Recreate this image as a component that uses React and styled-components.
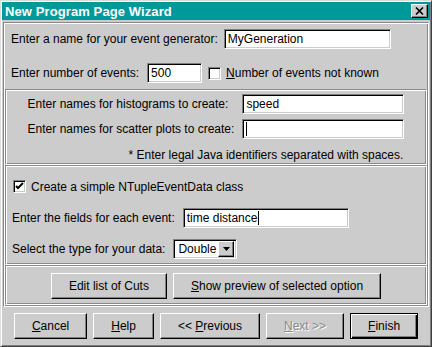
import React from "react";
import styled, { createGlobalStyle, css } from "styled-components";

const Global = createGlobalStyle`
  html, body { margin: 0; padding: 0; background: #cccccc; }
  body { font-family: "Liberation Sans", Arial, sans-serif; font-size: 12px; color: #000; }
`;

const Window = styled.div`
  box-sizing: border-box;
  width: 432px;
  height: 347px;
  background: #cccccc;
  border: 1px solid;
  border-color: #dddddd #404040 #404040 #dddddd;
  box-shadow: inset 1px 1px 0 #ffffff, inset -1px -1px 0 #808080;
  padding: 1px;
  display: flex;
  flex-direction: column;
`;

const TitleBar = styled.div`
  height: 18px;
  background: #009999;
  display: flex;
  align-items: center;
  justify-content: space-between;
  padding: 0 2px 0 3px;
`;

const Title = styled.span`
  color: #fff;
  font-weight: bold;
  font-size: 13px;
  letter-spacing: 0.1px;
`;

const raised = css`
  background: #cccccc;
  border: 1px solid;
  border-color: #ffffff #000000 #000000 #ffffff;
  box-shadow: inset -1px -1px 0 #808080;
`;

const sunken = css`
  border: 1px solid;
  border-color: #808080 #ffffff #ffffff #808080;
  box-shadow: inset 1px 1px 0 #000000, inset -1px -1px 0 #cccccc;
`;

const CloseBtn = styled.div`
  ${raised};
  box-sizing: border-box;
  width: 17px;
  height: 14px;
  display: flex;
  align-items: center;
  justify-content: center;
`;

const Content = styled.div`
  flex: 1;
  display: flex;
  flex-direction: column;
  padding: 2px 1px 0;
`;

const etched = css`
  border: 1px solid;
  border-color: #8a8a8a #ffffff #ffffff #8a8a8a;
  box-shadow: inset 1px 1px 0 #ffffff, inset -1px -1px 0 #8a8a8a;
`;

const MainPanel = styled.div`
  ${etched};
  display: flex;
  flex-direction: column;
  padding: 1px;
`;

const Section = styled.div`
  ${(p) => (p.$bordered ? etched : "")};
  display: flex;
  flex-direction: column;
  padding: ${(p) => p.$pad};
  gap: ${(p) => p.$gap || "0px"};
`;

const Row = styled.div`
  display: flex;
  align-items: center;
  gap: ${(p) => p.$gap || "8px"};
  height: ${(p) => p.$h || "20px"};
  margin-top: ${(p) => p.$mt || "0px"};
  margin-left: ${(p) => p.$ml || "0px"};
`;

const Label = styled.span`
  white-space: nowrap;
`;

const TextField = styled.div`
  ${sunken};
  box-sizing: border-box;
  background: #fff;
  width: ${(p) => p.$w}px;
  height: ${(p) => p.$h || 20}px;
  padding: 0 3px;
  display: flex;
  align-items: center;
  white-space: pre;
`;

const Caret = styled.span`
  display: inline-block;
  width: 1px;
  height: 14px;
  background: #000;
  margin-left: ${(p) => (p.$flush ? 0 : 1)}px;
`;

const CheckBox = styled.div`
  ${sunken};
  box-sizing: border-box;
  width: 13px;
  height: 13px;
  background: #fff;
  display: flex;
  align-items: center;
  justify-content: center;
  flex-shrink: 0;
`;

const U = styled.span`
  text-decoration: underline;
`;

const Grid = styled.div`
  display: grid;
  grid-template-columns: auto auto;
  column-gap: 8px;
  row-gap: 5px;
  justify-content: center;
  align-items: center;
`;

const Note = styled.div`
  grid-column: 1 / span 2;
  justify-self: end;
  margin-top: 4px;
  margin-right: 1px;
`;

const Select = styled.div`
  ${sunken};
  box-sizing: border-box;
  width: 64px;
  height: 20px;
  background: #fff;
  display: flex;
  align-items: center;
  padding: 2px 2px 2px 4px;
  justify-content: space-between;
`;

const ArrowBtn = styled.div`
  ${raised};
  box-sizing: border-box;
  width: 16px;
  height: 16px;
  display: flex;
  align-items: center;
  justify-content: center;
`;

const ButtonRow = styled.div`
  display: flex;
  justify-content: center;
  gap: 6px;
  padding: ${(p) => p.$pad};
`;

const Button = styled.div`
  ${raised};
  box-sizing: border-box;
  height: 26px;
  padding: 0 17px;
  display: flex;
  align-items: center;
  justify-content: center;
  white-space: pre;
  ${(p) =>
    p.$default &&
    css`
      border-color: #000;
      box-shadow: inset 1px 1px 0 #ffffff, inset -1px -1px 0 #000000, inset -2px -2px 0 #808080;
    `}
  ${(p) =>
    p.$disabled &&
    css`
      color: #8a8a8a;
      text-shadow: 1px 1px 0 #ffffff;
    `}
`;

const Check = () => (
  <svg width="9" height="9" viewBox="0 0 9 9">
    <path d="M1 4 L3 6 L8 1" stroke="#000" strokeWidth="2" fill="none" />
  </svg>
);

export default function App() {
  return (
    <>
      <Global />
      <Window>
        <TitleBar>
          <Title>New Program Page Wizard</Title>
          <CloseBtn>
            <svg width="9" height="8" viewBox="0 0 9 8">
              <path d="M1 0.5 L8 7.5 M8 0.5 L1 7.5" stroke="#000" strokeWidth="1.6" />
            </svg>
          </CloseBtn>
        </TitleBar>
        <Content>
          <MainPanel>
            <Section $pad="5px 7px 6px 6px" $gap="14px">
              <Row $gap="6px">
                <Label>Enter a name for your event generator:</Label>
                <TextField $w={167}>MyGeneration</TextField>
              </Row>
              <Row>
                <Label>Enter number of events:</Label>
                <TextField $w={55}>500</TextField>
                <Row $gap="5px" $h="13px" $ml="-2px">
                  <CheckBox />
                  <Label>
                    <U>N</U>umber of events not known
                  </Label>
                </Row>
              </Row>
            </Section>
            <Section $bordered $pad="4px 6px 2px">
              <Grid>
                <Label>Enter names for histograms to create:</Label>
                <TextField $w={162}>speed</TextField>
                <Label>Enter names for scatter plots to create:</Label>
                <TextField $w={162}>
                  <Caret $flush />
                </TextField>
                <Note>* Enter legal Java identifiers separated with spaces.</Note>
              </Grid>
            </Section>
            <Section $bordered $pad="14px 6px 5px 6px">
              <Row $gap="5px" $h="13px" $ml="1px">
                <CheckBox>
                  <Check />
                </CheckBox>
                <Label>Create a simple NTupleEventData class</Label>
              </Row>
              <Row $mt="15px">
                <Label>Enter the fields for each event:</Label>
                <TextField $w={166}>
                  <span>time distance</span>
                  <Caret />
                </TextField>
              </Row>
              <Row $mt="11px">
                <Label>Select the type for your data:</Label>
                <Select>
                  <span>Double</span>
                  <ArrowBtn>
                    <svg width="7" height="4" viewBox="0 0 7 4">
                      <path d="M0 0 H7 L3.5 4 Z" fill="#000" />
                    </svg>
                  </ArrowBtn>
                </Select>
              </Row>
            </Section>
            <Section $bordered $pad="0">
              <ButtonRow $pad="7px 0 5px">
                <Button>
                  <span>Edit list of Cuts</span>
                </Button>
                <Button>
                  <span>
                    <U>S</U>how preview of selected option
                  </span>
                </Button>
              </ButtonRow>
            </Section>
          </MainPanel>
          <ButtonRow $pad="6px 0 0">
            <Button>
              <span>
                <U>C</U>ancel
              </span>
            </Button>
            <Button>
              <span>
                <U>H</U>elp
              </span>
            </Button>
            <Button>
              <span>
                &lt;&lt; <U>P</U>revious
              </span>
            </Button>
            <Button $disabled>
              <span>
                <U>N</U>ext &gt;&gt;
              </span>
            </Button>
            <Button $default>
              <span>
                <U>F</U>inish
              </span>
            </Button>
          </ButtonRow>
        </Content>
      </Window>
    </>
  );
}
